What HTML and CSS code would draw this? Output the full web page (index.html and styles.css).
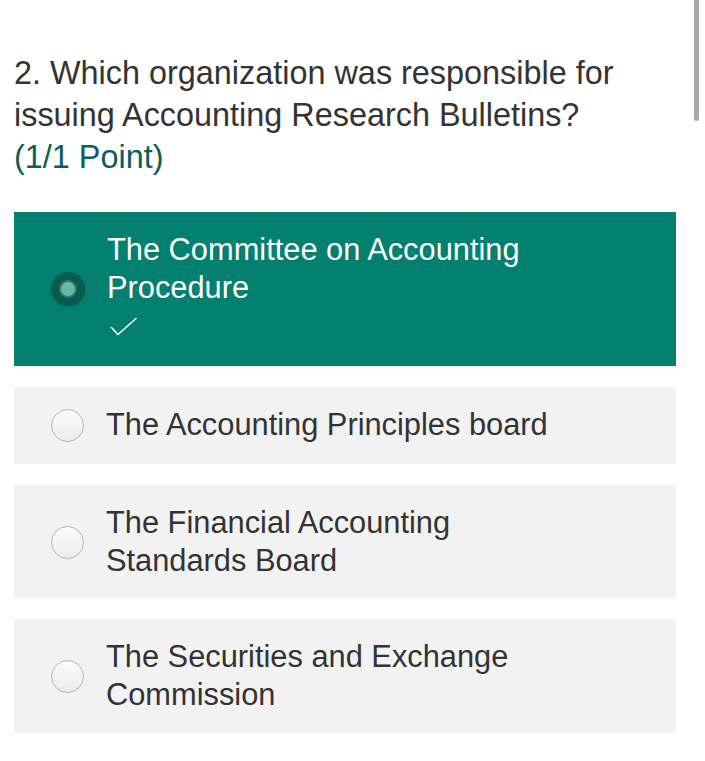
FILE: index.html
```html
<!DOCTYPE html>
<html lang="en">
<head>
<meta charset="utf-8">
<title>Quiz question</title>
<link rel="stylesheet" href="styles.css">
</head>
<body>
<div class="scrollbar"></div>
<main class="question">
  <h2 class="title">2. Which organization was responsible for issuing Accounting Research Bulletins? <span class="points">(1/1 Point)</span></h2>
  <div class="options">
    <div class="option selected">
      <span class="radio"><span class="dot"></span></span>
      <div class="label">
        <div class="text">The Committee on Accounting<br>Procedure</div>
        <div class="check">
          <svg width="28" height="20" viewBox="0 0 28 20"><path d="M1.5 10.5 L8 17.5 L26 1.5" fill="none" stroke="#ffffff" stroke-width="1.6" stroke-linecap="round" stroke-linejoin="round"/></svg>
        </div>
      </div>
    </div>
    <div class="option">
      <span class="radio"></span>
      <div class="label"><div class="text">The Accounting Principles board</div></div>
    </div>
    <div class="option">
      <span class="radio"></span>
      <div class="label"><div class="text">The Financial Accounting<br>Standards Board</div></div>
    </div>
    <div class="option">
      <span class="radio"></span>
      <div class="label"><div class="text">The Securities and Exchange<br>Commission</div></div>
    </div>
  </div>
</main>
</body>
</html>
```

FILE: styles.css
```css
html, body {
  margin: 0;
  padding: 0;
  background: #ffffff;
}

body {
  font-family: "Liberation Sans", Arial, sans-serif;
  width: 705px;
  height: 761px;
  overflow: hidden;
  position: relative;
}

.scrollbar {
  position: absolute;
  top: 0;
  left: 694px;
  width: 5px;
  height: 121px;
  background: #a9a9a9;
  border-radius: 0 0 3px 3px;
}

.question {
  padding: 52px 29px 0 14px;
}

.title {
  margin: 0;
  font-size: 32.4px;
  line-height: 42px;
  font-weight: normal;
  color: #333333;
  width: 630px;
}

.points {
  color: #0d5e58;
}

.options {
  margin-top: 34px;
  display: flex;
  flex-direction: column;
  gap: 21px;
}

.option {
  display: flex;
  align-items: center;
  gap: 22px;
  background: #f2f2f2;
  padding: 19px 20px 19px 37px;
  color: #333333;
}

.option:nth-child(2) {
  padding-bottom: 20px;
}

.option:nth-child(3) {
  padding-bottom: 18px;
}

.option.selected {
  background: #03806f;
  color: #ffffff;
}

.radio {
  flex: none;
  width: 31px;
  height: 31px;
  border-radius: 50%;
  border: 1.5px solid #b4b4b4;
  background: linear-gradient(#fbfbfb, #ececec);
  display: flex;
  align-items: center;
  justify-content: center;
  box-sizing: content-box;
}

.selected .radio {
  width: 34px;
  height: 34px;
  border: none;
  background: #0b5a50;
  box-shadow: 0 1px 2px rgba(0, 0, 0, 0.15);
}

.dot {
  width: 14px;
  height: 14px;
  border-radius: 50%;
  background: #6cb7a7;
  box-shadow: 0 0 0 2px #2d7d70;
}

.text {
  font-size: 30.8px;
  line-height: 38px;
}

.check {
  height: 40px;
  display: flex;
  align-items: center;
  padding-left: 3px;
}
```
